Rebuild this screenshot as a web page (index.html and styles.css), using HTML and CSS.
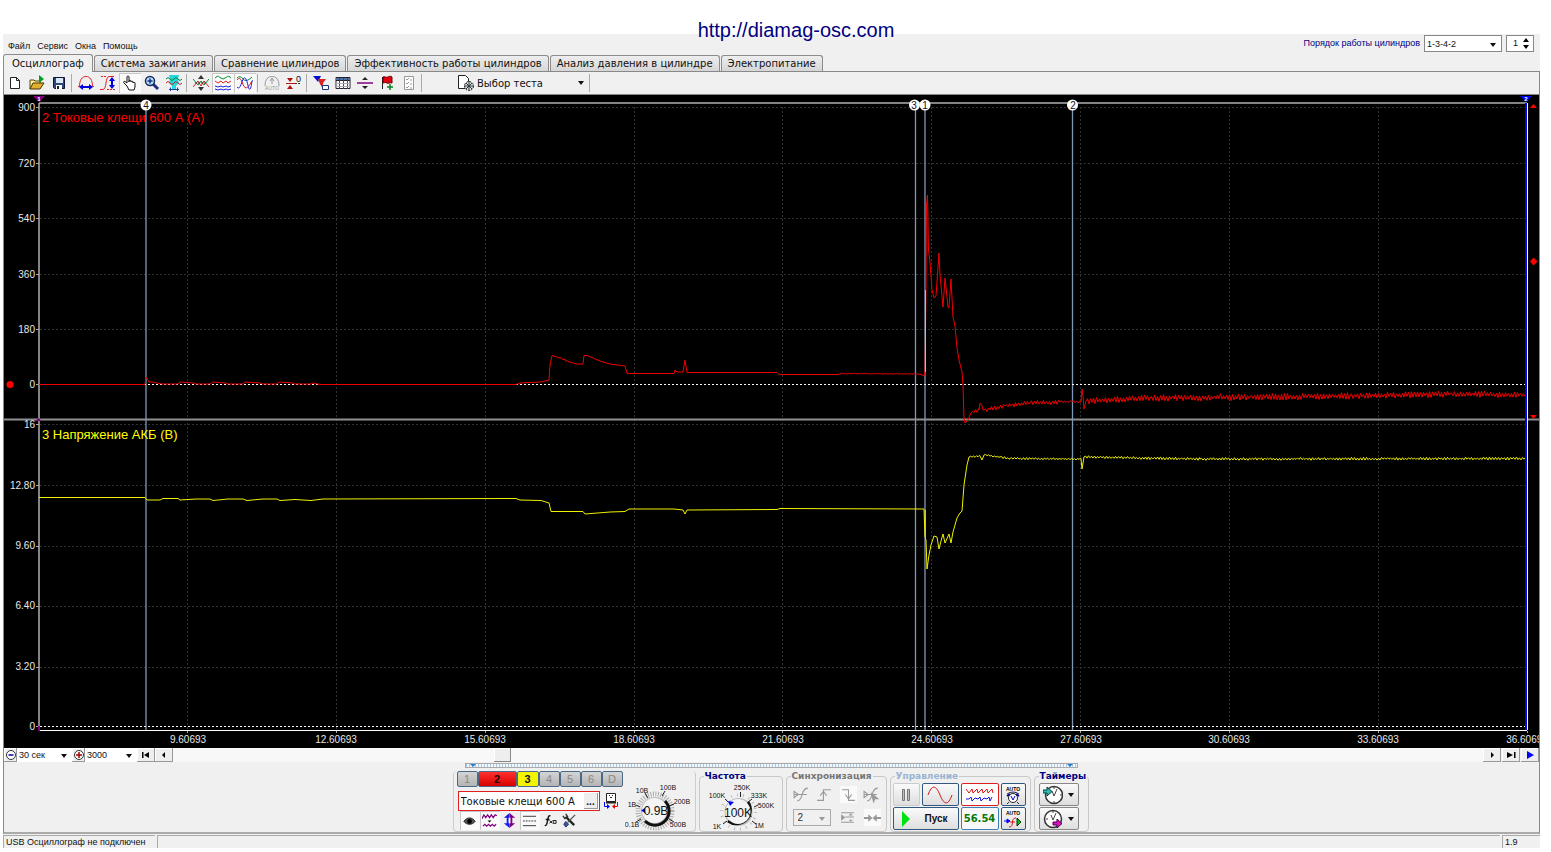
FILE: index.html
```html
<!DOCTYPE html>
<html lang="ru">
<head>
<meta charset="utf-8">
<title>Осциллограф</title>
<link rel="stylesheet" href="styles.css">
</head>
<body>
<a class="site-link" href="http://diamag-osc.com">http://diamag-osc.com</a>
<div class="app">
  <header class="header">
    <nav class="menu">
      <button>Файл</button><button>Сервис</button><button>Окна</button><button>Помощь</button>
    </nav>
    <div class="order">
      <label for="order">Порядок работы цилиндров</label>
      <span class="drop order-drop"><select id="order"><option>1-3-4-2</option></select></span>
      <span class="spin"><input id="cyl" aria-label="Цилиндр" value="1"><svg width="8" height="12" viewBox="0 0 8 12"><path d="M4 0L7 4H1zM4 11L7 7H1z"/></svg></span>
    </div>
  </header>
  <nav class="tabs">
    <button class="tab active">Осциллограф</button>
    <button class="tab">Система зажигания</button>
    <button class="tab">Сравнение цилиндров</button>
    <button class="tab">Эффективность работы цилиндров</button>
    <button class="tab">Анализ давления в цилиндре</button>
    <button class="tab">Электропитание</button>
  </nav>
  <main class="panel">
    <div class="toolbar">
      <button class="tool" aria-label="Новый"><svg viewBox="0 0 16 16"><path d="M3.500 2.500h6l3 3v8h-9z" fill="#fff" stroke="#222"/><path d="M9.500 2.500v3h3" fill="none" stroke="#222"/></svg></button>
      <button class="tool" aria-label="Открыть"><svg viewBox="0 0 16 16"><path d="M1 14V5h4l1 1h5v3" fill="#fff2a0" stroke="#554400"/><path d="M1 14l3-6h11l-4 6z" fill="#e0b030" stroke="#443300"/><path d="M10 0l5 4-5 4z" fill="#00a020"/></svg></button>
      <button class="tool" aria-label="Сохранить"><svg viewBox="0 0 16 16"><path d="M2.500 2.500h11v11h-10l-1-1z" fill="#304878" stroke="#101830"/><path d="M5 3h7v5H5z" fill="#d8e8f8"/><path d="M5 10h6v4H5z" fill="#fff"/><path d="M6 11h2v3H6z" fill="#222"/></svg></button>
      <span class="sep"></span>
      <button class="tool" aria-label="Период"><svg viewBox="0 0 16 16"><path d="M0 11.500h1.500C1.500 5 4 1.500 8 1.500s6.500 3.500 6.500 10H16" fill="none" stroke="#e02020"/><path d="M4 12h8" stroke="#0000e0" stroke-width="2"/><path d="M5 9v6l-4-3zM11 9v6l4-3z" fill="#0000e0"/></svg></button>
      <button class="tool" aria-label="Амплитуда"><svg viewBox="0 0 16 16"><path d="M0 14.500h3C7 14 5 2 9 1.500h5" fill="none" stroke="#e02020"/><path d="M1 1.500h6M7 14.500h9" stroke="#e02020" stroke-dasharray="2 1"/><path d="M12 5v6" stroke="#0000e0" stroke-width="2"/><path d="M9 6h6l-3-4zM9 10h6l-3 4z" fill="#0000e0"/></svg></button>
      <button class="tool on" aria-label="Рука"><svg viewBox="0 0 16 16"><path d="M5 11L2 8c-1-1 0-2 1-1.500L5 8V2c0-1.300 2-1.300 2 0v5-1c0-1 2-1 2 0v1c0-1 2-1 2 0v1c0-1 2-1 2 0v4l-1 3H7z" fill="#fff" stroke="#111"/></svg></button>
      <button class="tool" aria-label="Лупа"><svg viewBox="0 0 16 16"><path d="M9 9l5 5" stroke="#203080" stroke-width="3"/><circle cx="6" cy="6" r="4.500" fill="#b8e0f8" stroke="#182860" stroke-width="1.500"/><path d="M3.500 6h5M6 3.500v5" stroke="#103080" stroke-width="1.500"/></svg></button>
      <button class="tool" aria-label="Фильтр"><svg viewBox="0 0 16 16"><path d="M3 0h10l-1 4 1 4-3 3v4H6v-4L3 8l1-4z" fill="#20d8e0"/><path d="M0 4q2-3 4 0t4 0 4 0 4 0" fill="none" stroke="#008030"/><path d="M0 8q2-3 4 0t4 0 4 0 4 0" fill="none" stroke="#d02020"/><path d="M3 14.500h10M4.500 12.500v4M11.500 12.500v4" stroke="#2040a0"/></svg></button>
      <span class="sep"></span>
      <button class="tool" aria-label="Масштаб"><svg viewBox="0 0 16 16"><path d="M0 4l5 6 3-4 3 4 5-6" fill="none" stroke="#009030"/><path d="M0 12l5-6 3 5 3-5 5 6" fill="none" stroke="#e02020"/><path d="M2 8h12" stroke="#333" stroke-dasharray="2 1"/><path d="M5 4l3-4 3 4zM5 12l3 4 3-4z" fill="#333"/></svg></button>
      <button class="tool on" aria-label="Раздельно"><svg viewBox="0 0 16 16" fill="none"><path d="M0 3.500q2-4 5-1t6 0 5 1" stroke="#009030"/><path d="M0 6l3 2 3-2 2 2 3-2 2 2 3-2" stroke="#e02020"/><path d="M0 11l3 1 3-1 2 1 3-1 2 1 3-1M0 14l3 1 3-1 2 1 3-1 2 1 3-1" stroke="#2020e0"/></svg></button>
      <button class="tool on" aria-label="Вместе"><svg viewBox="0 0 16 16" fill="none"><path d="M0 3q3-3 6 1t9-2" stroke="#009030"/><path d="M0 5q3-4 5 2t4 6 6-7" stroke="#e02020"/><path d="M0 12C4 17 5 1 8 3s3 13 5 11 1-8 3-9" stroke="#2020e0"/></svg></button>
      <span class="sep"></span>
      <button class="tool" aria-label="Авто"><svg viewBox="0 0 16 16"><path d="M1 11C1 4 4 1.500 8 1.500S15 4 15 11M8 4v5M6 6l2-3 2 3" fill="none" stroke="#999"/><text x="8" y="15" text-anchor="middle" font-size="5" fill="#999">AUTO</text></svg></button>
      <button class="tool" aria-label="Ноль"><svg viewBox="0 0 16 16"><path d="M0 8.500h9" stroke="#c01010"/><path d="M1 3h6L4 7zM1 14h6l-3-4z" fill="#b01010"/><path d="M9 8.500h6" stroke="#333" stroke-dasharray="2 1"/><text x="10" y="7" font-size="9" fill="#111">0</text></svg></button>
      <span class="sep"></span>
      <button class="tool" aria-label="Маркер"><svg viewBox="0 0 16 16"><path d="M0 1h8L5 7z" fill="#0010d0"/><path d="M5 4h8l-3 4v6L7 9z" fill="#e02020"/><path d="M9.500 10.500h6v4h-6z" fill="#fff" stroke="#203080"/></svg></button>
      <button class="tool" aria-label="Таблица"><svg viewBox="0 0 16 16"><path d="M1 2.500h14v11H1z" fill="#fff" stroke="#223"/><path d="M1 3h14v2H1z" fill="#5070a0"/><path d="M1 5.500h14" stroke="#223"/><path d="M4.500 3v11M8.500 3v11M12.500 3v11" stroke="#446"/><path d="M1 8.500h14M1 11.500h14" stroke="#aab"/></svg></button>
      <button class="tool" aria-label="Разделить"><svg viewBox="0 0 16 16"><path d="M0 8h16" stroke="#800080" stroke-width="1.500"/><path d="M5 5h6L8 2zM5 11h6l-3 3z" fill="#222"/></svg></button>
      <button class="tool" aria-label="Флаг"><svg viewBox="0 0 16 16"><path d="M3.500 2v12" stroke="#222"/><path d="M4 2c2-1 3 1 5 0s3-1 4 0v6c-2-1-3 1-5 0s-3 0-4 0z" fill="#e00010" stroke="#600"/><path d="M11 9v6M8 12h6" stroke="#008020" stroke-width="1.500"/></svg></button>
      <button class="tool" aria-label="Список"><svg viewBox="0 0 16 16"><path d="M3.500 1.500h9v13h-9z" fill="#fff" stroke="#999"/><path d="M5 4l1 1 2-2M5 8l1 1 2-2M5 12l1 1 2-2M9 5h2M9 9h2M9 13h2" fill="none" stroke="#999"/></svg></button>
      <span class="sep wide"></span>
      <button class="test"><svg width="18" height="18" viewBox="0 0 18 18"><path d="M1.500 1.500h7l3 3v10h-10z" fill="#fff" stroke="#222"/><circle cx="12" cy="12" r="4.500" fill="#d8e4d8" stroke="#222" stroke-dasharray="2 1"/><path d="M12 7v10M7 12h10M9 9l6 6M15 9l-6 6" stroke="#334"/></svg><span>Выбор теста</span><i class="caret"></i></button>
      <span class="sep"></span>
    </div>

    <svg class="chart" viewBox="4 95 1535 653" role="img" aria-label="Осциллограмма">
      <path class="grid" d="M187.500 107V730M336.500 107V730M485.500 107V730M634.500 107V730M782.500 107V730M931.500 107V730M1080.500 107V730M1229.500 107V730M1378.500 107V730M40 107.500H1527M40 163.500H1527M40 218.500H1527M40 274.500H1527M40 329.500H1527M40 424.500H1527M40 485.500H1527M40 546.500H1527M40 606.500H1527M40 667.500H1527"/>
      <path class="ticks" d="M36 107.500h3M36 163.500h3M36 218.500h3M36 274.500h3M36 329.500h3M36 384.500h3M36 424.500h3M36 485.500h3M36 546.500h3M36 606.500h3M36 667.500h3M36 726.500h3M187.500 731v2M336.500 731v2M485.500 731v2M634.500 731v2M782.500 731v2M931.500 731v2M1080.500 731v2M1229.500 731v2M1378.500 731v2M1527.500 731v2"/>
      <path d="M39 103H1527M39 103V731" stroke="#b0b0b0" stroke-width="1.500"/>
      <path d="M39 730.500H1527" stroke="#fff"/>
      <path d="M4 419.500H1539" stroke="#909090" stroke-width="2"/>
      <path d="M146 104V730M915.500 104V730M925 104V730M1072.500 104V730" stroke="#8098b8" stroke-width="1.300"/>
      <path class="zero" d="M40 384.500H1527M40 726.500H1527"/>
      <path id="amps" class="trace red"/>
      <path id="volts" class="trace yellow"/>
      <path d="M925.500 290V372M925.500 510V540" stroke="#80d0e8"/>
      <path d="M1526 103V730" stroke="#0000ff" stroke-width="2"/><path d="M1527.500 103V730" stroke="#fff"/>
      <g class="ylab">
        <text x="35" y="111">900</text><text x="35" y="167">720</text><text x="35" y="222">540</text><text x="35" y="278">360</text><text x="35" y="333">180</text><text x="35" y="388">0</text>
        <text x="35" y="428">16</text><text x="35" y="489">12.80</text><text x="35" y="549">9.60</text><text x="35" y="609">6.40</text><text x="35" y="670">3.20</text><text x="35" y="730">0</text>
      </g>
      <g class="xlab">
        <text x="188" y="743">9.60693</text><text x="336" y="743">12.60693</text><text x="485" y="743">15.60693</text><text x="634" y="743">18.60693</text><text x="783" y="743">21.60693</text><text x="932" y="743">24.60693</text><text x="1081" y="743">27.60693</text><text x="1229" y="743">30.60693</text><text x="1378" y="743">33.60693</text><text x="1527" y="743">36.60693</text>
      </g>
      <text class="name" x="42" y="122" fill="#f00">2 Токовые клещи 600 А (А)</text>
      <text class="name" x="42" y="439" fill="#ff0">3 Напряжение АКБ (В)</text>
      <path d="M33 96h12l-6 6zM35 421l4-3 2 3zM38 726h2v5h-2z" fill="#800080"/><path d="M1520 96h12l-6 6z" fill="#0000ff"/>
      <text class="tiny" x="39" y="101">1</text><text class="tiny" x="1526" y="101">2</text>
      <g class="pin"><circle cx="146" cy="105" r="5.500"/><circle cx="914.500" cy="105" r="5.500"/><circle cx="925" cy="105" r="5.500"/><circle cx="1072.500" cy="105" r="5.500"/>
        <text x="146" y="109">4</text><text x="914" y="109">3</text><text x="925" y="109">1</text><text x="1073" y="109">2</text></g>
      <g fill="#f00"><circle cx="10" cy="384.500" r="3.500"/><path d="M1530 108h7l-3.500-4zM1530 261.500l3.500-4 4 4-4 4zM1530 415h7l-3.500 4z"/></g>
    </svg>

    <div class="timebar">
      <button class="nb" aria-label="Уменьшить"><svg width="12" height="12" viewBox="0 0 12 12"><circle cx="6" cy="6" r="4.500" fill="#fff" stroke="#333"/><path d="M3.500 6h5" stroke="#0000a0" stroke-width="1.500"/></svg></button>
      <span class="drop flat w55"><select aria-label="Развёртка"><option>30 сек</option></select></span>
      <button class="nb" aria-label="Увеличить"><svg width="12" height="12" viewBox="0 0 12 12"><circle cx="6" cy="6" r="4.500" fill="#fff" stroke="#333"/><path d="M3 6h6M6 3v6" stroke="#a00000" stroke-width="1.500"/></svg></button>
      <span class="drop flat w52"><select aria-label="Точки"><option>3000</option></select></span>
      <button class="nb big" aria-label="В начало"><svg width="10" height="8" viewBox="0 0 10 8"><path d="M1 1h1.500v6H1zM3 4l5-3v6z"/></svg></button>
      <button class="nb big" aria-label="Назад"><svg width="10" height="8" viewBox="0 0 10 8"><path d="M3 4l3-3v6z"/></svg></button>
      <div class="track"><button class="thumb" aria-label="Прокрутка"></button></div>
      <button class="nb big" aria-label="Вперёд"><svg width="10" height="8" viewBox="0 0 10 8"><path d="M7 4L4 1v6z"/></svg></button>
      <button class="nb big gap" aria-label="В конец"><svg width="10" height="8" viewBox="0 0 10 8"><path d="M8 1h1.500v6H8zM7 4L1 1v6z"/></svg></button>
      <button class="nb big gap" aria-label="Воспроизвести"><svg width="10" height="8" viewBox="0 0 10 8"><path d="M9 4L2 0v8z" fill="#00f"/></svg></button>
    </div>
    <div class="splitter"><i></i><i></i></div>

    <div class="groups">
      <section class="chan">
        <div class="chan-left">
          <div class="nums"><button>1</button><button class="n-red">2</button><button class="n-yel">3</button><button>4</button><button>5</button><button>6</button><button>D</button></div>
          <div class="probe"><span class="probe-box"><input aria-label="Датчик" value="Токовые клещи 600 А"><button aria-label="Выбрать">...</button></span>
            <svg width="16" height="18" viewBox="0 0 16 18"><path d="M3.500 1.500h9v8h-9z" fill="#fff" stroke="#222"/><path d="M6 3.500h1M9 3.500h1M7 5.500h2" stroke="#222"/><path d="M3 10.500h10" stroke="#222" stroke-width="2"/><path d="M5 14.500H1.500V10" fill="none" stroke="#00f"/><path d="M4 12v5l3-2.500z" fill="#00f"/><path d="M11 14.500h3.500V10" fill="none" stroke="#e00"/><path d="M12 12v5l-3-2.500z" fill="#e00"/></svg></div>
          <div class="minis">
            <button class="on" aria-label="Видимость"><svg viewBox="0 0 16 16"><path d="M2 9c3-5 9-5 12 0-3 4-9 4-12 0z" fill="#555" stroke="#222"/><circle cx="8" cy="9" r="2.500"/></svg></button>
            <button class="on" aria-label="Форма"><svg viewBox="0 0 16 16"><path d="M0 6l2-4 2 3 2-3 2 3 2-3 2 3 2-3 2 1M1 14l2-2 2 2 2-2 2 2 2-2 2 2 2-2" fill="none" stroke="#800080" stroke-width="1.300"/><path d="M6 8h4l-2 2z"/></svg></button>
            <button aria-label="Смещение"><svg viewBox="0 0 16 16"><path d="M8 0l6 5h-3v6h3l-6 5z" fill="#800080"/><path d="M8 0L2 5h3v6H2l6 5z" fill="#1818f0"/><path d="M8 5v6" stroke="#fff" stroke-width="2"/></svg></button>
            <button class="on" aria-label="Линии"><svg viewBox="0 0 16 16"><path d="M1 3.500h14M1 13.500h14" stroke="#333"/><path d="M1 8.500h14" stroke="#333" stroke-dasharray="2 1"/></svg></button>
            <button aria-label="Функция"><svg viewBox="0 0 16 16"><path d="M9 3c-3-1-2 3-4 9-1 2-2 1-2 1M4 7h4" fill="none" stroke="#111" stroke-width="1.500"/><path d="M8 8l3 3M11 8l-3 3M12 8h3v3h-3z" fill="none" stroke="#111"/></svg></button>
            <button aria-label="Настройка"><svg viewBox="0 0 16 16"><path d="M4 4l9 9" stroke="#222" stroke-width="2.500"/><path d="M14 2L6 10" stroke="#555" stroke-width="1.500"/><path d="M1 3l2 3 3-2-2-3" fill="none" stroke="#333" stroke-width="1.500"/><path d="M4 9l3 3-3 3-2-3z" fill="#38589c" stroke="#203060"/></svg></button>
          </div>
        </div>
        <svg class="knob" width="70" height="56" viewBox="625 775 70 56" role="img" aria-label="Предел 0.9В">
          <circle cx="655" cy="811" r="17" fill="none" stroke="#aaa" stroke-width="5" stroke-dasharray="1 1.500"/>
          <path d="M636 805l4 2M645 793l3 5M665 791l-3 5M674 804l-5 2M636 822l5-3M674 822l-5-3" stroke="#222"/>
          <circle cx="655" cy="811" r="14" fill="#bbb"/><path d="M645 821A14 14 0 0 0 665 801" fill="none" stroke="#111" stroke-width="3"/><circle cx="654.500" cy="810.500" r="12.500" fill="#f4f4f4"/>
          <path d="M641 810.500l4-2.500v5z" fill="#00f"/>
          <text class="kv" x="656" y="815">0.9B</text>
          <g class="kl"><text x="632" y="827">0.1B</text><text x="632" y="807">1B</text><text x="642" y="793">10B</text><text x="668" y="790">100B</text><text x="682" y="804">200B</text><text x="678" y="827">500B</text></g>
        </svg>
      </section>
      <fieldset class="freq"><legend>Частота</legend>
        <svg class="knob" width="78" height="48" viewBox="702 782 78 48" role="img" aria-label="Частота 100K">
          <circle cx="738.500" cy="811" r="17" fill="none" stroke="#bbb" stroke-width="3" stroke-dasharray="1 5"/>
          <path d="M725 798l4 4M740.500 791v5M752 798l-4 3M758 804l-4 2M723 823l4-3M756 823l-4-3" stroke="#222"/>
          <circle cx="738.500" cy="811" r="14" fill="#bbb"/><path d="M728 820A14 14 0 0 0 748 801" fill="none" stroke="#111" stroke-width="3"/><circle cx="738" cy="810.500" r="12.500" fill="#f4f4f4"/>
          <path d="M728 800l6 1-4 4z" fill="#00f"/>
          <text class="kv" x="738" y="816">100K</text>
          <g class="kl"><text x="717" y="797">100K</text><text x="742" y="789">250K</text><text x="759" y="797">333K</text><text x="766" y="807">500K</text><text x="717" y="828">1K</text><text x="759" y="827">1M</text></g>
        </svg>
      </fieldset>
      <fieldset class="sync"><legend>Синхронизация</legend>
        <div class="sync-row">
          <svg viewBox="0 0 16 16"><path d="M1 8h12M4 14C10 14 7 2 14 2M1 5v6l4-3z"/></svg>
          <svg viewBox="0 0 16 16"><path d="M1 13.500h6V3.500h7M4 9l3-4 3 4"/></svg>
          <svg class="lit" viewBox="0 0 16 16"><path d="M2 3.500h6v10h6M5 8l3 4 3-4"/></svg>
          <svg viewBox="0 0 16 16"><path d="M1 8h12M4 14C10 14 7 2 14 2M1 5v6l4-3z"/><path d="M8 7l6 5-3 0-1 3z" fill="#999"/></svg>
        </div>
        <div class="sync-row">
          <span class="drop sync-drop"><select aria-label="Канал синхронизации" disabled><option>2</option></select></span>
          <svg viewBox="0 0 16 16"><path d="M2 3.500h12M6 7.500h8M2 12.500h12"/><path d="M2 5v6l4-3zM9 6l2-2 2 2zM9 10l2 2 2-2z" fill="#999" stroke="none"/></svg>
          <svg class="lit" viewBox="0 0 16 16"><path d="M0 8.500h5M11 8.500h5" stroke-width="2"/><path d="M4 5v7l4-3.500zM12 5v7L8 8.500z" fill="#999" stroke="none"/></svg>
        </div>
      </fieldset>
      <fieldset class="ctrl"><legend>Управление</legend>
        <div class="ctrl-grid">
          <button class="cb off" aria-label="Пауза"><svg width="12" height="14" viewBox="0 0 12 14"><path d="M2.500 1.500h2v11h-2zM7.500 1.500h2v11h-2z" fill="#bbb" stroke="#777"/></svg></button>
          <button class="cb" aria-label="Синус"><svg width="26" height="18" viewBox="0 0 26 18"><path d="M1 9C5-2 9-1 13 9s8 11 12 0" fill="none" stroke="#d01010"/></svg></button>
          <button class="cb redb" aria-label="Сигналы"><svg width="30" height="18" viewBox="0 0 30 18" fill="none"><path d="M1 3l3 4 3-4 1 4 4-4 1 4 4-4 1 4 4-4 1 4 4-4 1 4" stroke="#e01010"/><path d="M1 13h3l2-2 1 4 3-3 3 1 2-2 1 4 3-3 3 1 2-2 1 4 2-4" stroke="#1010e0"/></svg></button>
          <button class="cb" aria-label="Авто таймер"><svg width="22" height="20" viewBox="0 0 22 20"><text class="au" x="11" y="6">AUTO</text><path d="M5 11l3-2M17 11l-3-2" stroke="#00a" stroke-width="2"/><circle cx="11" cy="13" r="4.500" fill="#fff" stroke="#222"/><path d="M9 11l2 4 2-4" fill="none" stroke="#00c"/><path d="M5 9q6-4 12 0M7 17l-2 2M15 17l2 2" fill="none" stroke="#224"/></svg></button>
          <button class="cb start"><svg width="10" height="16" viewBox="0 0 10 16"><path d="M1 0l8 8-8 8z" fill="#00e010"/></svg><span>Пуск</span></button>
          <output class="cb time">56.54</output>
          <button class="cb" aria-label="Авто запуск"><svg width="22" height="20" viewBox="0 0 22 20"><text class="au" x="11" y="6">AUTO</text><path d="M2 12h3M5 10l3 2-3 2z" stroke="#00f" fill="#00f"/><path d="M7 18c6 0 1-9 7-9M8 13h5" fill="none" stroke="#d01010"/><path d="M15 9l4 4-4 4z" fill="#00c010" stroke="#030"/></svg></button>
        </div>
      </fieldset>
      <fieldset class="timers"><legend>Таймеры</legend>
        <button class="cb" aria-label="Таймер запуска"><svg width="20" height="20" viewBox="0 0 20 20"><circle cx="11" cy="10" r="8.500" fill="#fff" stroke="#333" stroke-width="1.500"/><path d="M9 6l2 5 3-7M11 2v2M11 16v2M17 10h2" fill="none" stroke="#444"/><path d="M0 5h4V2l5 4.500L4 11V8H0z" fill="#30b8b0" stroke="#044"/></svg><i class="caret"></i></button>
        <button class="cb" aria-label="Таймер остановки"><svg width="20" height="20" viewBox="0 0 20 20"><circle cx="10" cy="10" r="8.500" fill="#fff" stroke="#333" stroke-width="1.500"/><path d="M8 6l2 5 3-7M10 2v2M3 10h2" fill="none" stroke="#444"/><path d="M10 13h4v-3l5 4.500-5 4.500v-3h-4z" fill="#e010c0" stroke="#404"/></svg><i class="caret"></i></button>
      </fieldset>
    </div>
  </main>
  <footer class="status"><span class="s1">USB Осциллограф не подключен</span><span class="s2"></span><span class="s3">1.9</span></footer>
</div>
<script src="chart.js"></script>
</body>
</html>
```

FILE: styles.css
```css
* { box-sizing: border-box; }
body { margin: 0; padding: 34px 11px 0 3px; background: #fff; font-family: "Liberation Sans", Arial, sans-serif; font-size: 10px; color: #111; position: relative; }
button, input, select { font: inherit; color: inherit; margin: 0; padding: 0; border: 0; background: none; border-radius: 0; }
button { display: flex; align-items: center; justify-content: center; }
svg { display: block; flex: none; }
.site-link { position: absolute; top: 18px; left: 0; right: 0; margin: 0 auto; width: max-content; padding-left: 41px; font-size: 20px; line-height: 24px; color: #000080; text-decoration: none; }
.app { background: #f0f0f0; }
.header { display: flex; justify-content: space-between; height: 20px; }
.menu { display: flex; gap: 7px; padding: 6px 0 0 5px; font-size: 9px; line-height: 12px; align-items: flex-start; }
.order { display: flex; align-items: flex-start; gap: 4px; padding: 1px 6px 0 0; color: #000080; font-size: 9px; line-height: 17px; }
.drop { position: relative; display: flex; background: #fff; border: 1px solid #888; color: #111; font-size: 9px; }
.drop select { appearance: none; width: 100%; padding-left: 2px; outline: 0; }
.drop::after, .caret { content: ""; border: 3px solid transparent; border-top: 4px solid #111; border-bottom: 0; }
.drop::after { position: absolute; right: 5px; top: 50%; margin-top: -1px; pointer-events: none; }
.order-drop { width: 78px; height: 17px; }
.spin { display: flex; align-items: center; width: 28px; height: 17px; background: #fff; border: 1px solid #888; color: #111; }
.spin input { width: 15px; padding-left: 6px; }
.tabs { display: flex; height: 17px; align-items: flex-end; }
.tab { height: 16px; padding: 0 6px; border: 1px solid #8c8c8c; border-bottom: 0; border-radius: 3px 3px 0 0; background: linear-gradient(#eee, #d6d6d6); font-family: "DejaVu Sans", sans-serif; font-size: 10px; white-space: nowrap; margin-right: 1px; }
.tab.active { height: 18px; margin-bottom: -1px; padding: 0 8px; background: #f0f0f0; position: relative; }
.panel { border: 1px solid #888; border-bottom: 2px solid #aaa; }
.toolbar { display: flex; align-items: center; height: 23px; border-bottom: 1px solid #888; }
.tool { width: 22px; height: 20px; }
.tool svg { width: 16px; height: 16px; }
.on { background: #fafafa; box-shadow: inset 1px 1px #c8c8c8; }
.sep { width: 1px; height: 18px; margin: 0 3px 0 1px; background: #aaa; }
.sep.wide { margin-right: 35px; }
.test { width: 131px; justify-content: flex-start; gap: 2px; font-family: "DejaVu Sans", sans-serif; font-size: 10px; }
.test .caret { margin-left: auto; margin-right: 4px; }
.chart { width: 100%; height: auto; background: #000; }
.grid { stroke: #303030; stroke-dasharray: 2 2; }
.zero { stroke: #fff; stroke-dasharray: 2 2; }
.ticks { stroke: #aaa; }
.trace { fill: none; stroke-width: 1; stroke-linejoin: bevel; }
.red { stroke: #f00000; }
.yellow { stroke: #f0f000; }
.ylab, .xlab { fill: #e8e8e8; font-size: 10px; text-anchor: end; }
.xlab { text-anchor: middle; }
.name { font-size: 13px; }
.tiny { font-size: 6px; font-weight: bold; text-anchor: middle; fill: #fff; }
.pin circle { fill: #fff; }
.pin text { font-size: 10px; text-anchor: middle; fill: #111; }
.timebar { display: flex; height: 14px; }
.nb { width: 13px; background: #eee; box-shadow: inset -1px -1px #999, inset 1px 1px #fff; }
.nb.big { width: 18px; }
.gap { margin-left: 1px; }
.flat { border: 0; }
.w55 { width: 55px; }
.w52 { width: 52px; }
.track { flex: 1; display: flex; background: #f8f8f8; }
.thumb { width: 17px; margin-left: 24.500%; background: #eee; box-shadow: inset -1px -1px #888, inset 1px 1px #fff; }
.splitter { width: 613px; height: 5px; margin: 1px auto 3px; border: 1px solid #aaa; display: flex; justify-content: space-between; background: repeating-linear-gradient(90deg, #a8c8e8 0 1px, #f4f8fc 1px 3px); padding: 0 4px; }
.splitter i { border: 3px solid transparent; border-top: 3px solid #2080e0; border-bottom: 0; }
.groups { display: flex; justify-content: center; gap: 3px; height: 61px; padding-right: 2px; }
.chan { display: flex; gap: 1px; width: 243px; height: 61px; border: 1px solid #ccc; border-top: 0; border-radius: 4px; padding-left: 3px; }
.nums { display: flex; height: 16px; }
.nums button { width: 21px; border: 1px solid #4a6888; border-radius: 2px; background: linear-gradient(#d4d4d4, #b4b4b4); color: #888; font-size: 11px; }
.nums .n-red { width: 39px; background: linear-gradient(#ff3030, #d80000); color: #200; font-weight: bold; }
.nums .n-yel { width: 22px; background: #f4f400; color: #111; font-weight: bold; }
.chan-left { display: flex; flex-direction: column; width: 168px; }
.probe { display: flex; align-items: center; gap: 3px; margin-top: 4px; padding-left: 1px; }
.probe-box { display: flex; width: 142px; height: 20px; padding: 1px; border: 1px solid #e02020; background: #fff; }
.probe-box input { flex: 1; min-width: 0; padding-left: 1px; font-family: "DejaVu Sans", sans-serif; font-size: 10px; }
.probe-box button { width: 14px; background: #eee; box-shadow: inset -1px -1px #999; font-weight: bold; }
.minis { display: flex; padding-left: 3px; }
.minis button { width: 20px; height: 19px; }
.minis svg { width: 15px; height: 15px; }
.knob { align-self: flex-end; }
.kv { font-size: 12px; text-anchor: middle; fill: #111; }
.kl { font-size: 7px; text-anchor: middle; fill: #111; }
fieldset { margin: 0; min-width: 0; height: 61px; padding: 2px; border: 1px solid #c8c8c8; border-radius: 4px; }
legend { padding: 0 1px; margin-left: 2px; line-height: 10px; font-family: "DejaVu Sans", sans-serif; font-size: 9px; font-weight: bold; color: #000080; }
.freq { width: 84px; }
.sync { width: 101px; }
.sync legend { color: #777; font-weight: bold; }
.ctrl { width: 141px; }
.ctrl legend { color: #98b4d0; }
.timers { width: 55px; }
.sync-row { display: flex; justify-content: space-between; align-items: center; height: 23px; padding: 0 3px 0 4px; }
.sync-row svg { width: 17px; height: 17px; fill: none; stroke: #999; }
.sync-row .lit { background: #fafafa; }
.sync-drop { width: 38px; height: 17px; background: #f0f0f0; border-color: #aaa; font-size: 10px; }
.sync-drop::after { border-top-color: #999; }
.sync-drop select { color: #333; opacity: 1; padding-left: 4px; }
.ctrl-grid { display: grid; grid-template-columns: 27px 37px 38px 25px; grid-template-rows: 23px 23px; column-gap: 2px; row-gap: 1px; }
.cb { display: flex; align-items: center; justify-content: center; height: 23px; border: 1px solid #305880; border-radius: 2px; background: linear-gradient(#fafafa, #dedede); }
.off { border-color: #ccc; }
.redb { border-color: #e02020; background: #fff; }
.start { grid-column: span 2; justify-content: flex-start; padding-left: 7px; gap: 14px; font-weight: bold; font-size: 10px; }
.time { color: #087808; border-color: #4080b8; font-family: "DejaVu Sans", sans-serif; font-size: 10px; font-weight: bold; background: #f8f8f8; }
.au { font-size: 5px; font-weight: bold; text-anchor: middle; }
.timers .cb { width: 40px; margin: 0 0 1px 2px; gap: 5px; border-color: #888; }
.status { display: flex; gap: 2px; padding-top: 1px; height: 14px; font-size: 9px; line-height: 12px; }
.status span { border-top: 1px solid #aaa; border-left: 1px solid #aaa; padding-left: 2px; white-space: nowrap; }
.s1 { width: 152px; }
.s2 { flex: 1; }
.s3 { width: 38px; }
```

FILE: chart.js
```js
// Key points of each trace: x, y, and the ripple amplitude up to the next point.
const amps = [[39,384.5,0],[145,384.5,0],[146,377,0],[149,382,0],[152,382,0],[162,384,0],[178,384,0],[180,382,0],[194,383,0],[196,384,0],[210,384,0],[213,382,0],[226,383,0],[228,384,0],[243,384,0],[245,382,0],[260,383,0],[263,384,0],[277,384,0],[279,382,0],[293,383,0],[295,384,0],[311,384,0],[313,383,0],[320,384.5,0],[516,384.5,0],[520,383,0],[541,382,0],[549,380,0],[550,365,0],[552,355.5,0],[560,358,1],[570,362,0],[576,364,0],[583,364,0],[584,355.5,0],[587,355.5,0],[600,361,0],[610,364,0],[625,366,0],[627,373.5,0],[674,373.5,0],[675,370,0],[677,372,0],[683,372,0],[685,360,0],[687,372.5,0],[777,372.5,0],[779,374.5,0],[838,374.5,0],[841,373.5,.4],[920,374,0],[924,376,0],[925,371,0],[926,290,0],[926.5,205,0],[927.5,195,0],[928.5,250,0],[930,262,0],[932,290,0],[934,298,0],[936,296,0],[939,253,0],[940,275,0],[943,307,0],[945,278,0],[948,307,0],[949,308,0],[951,279,0],[953,317,0],[955,326,0],[957,348,0],[959,360,0],[962,372,0],[963,385,0],[964,418,0],[965,423,0],[968,420,0],[971,413,2],[979,410,2],[980,403,2],[984,410,2],[1005,406,2],[1030,403,2],[1060,402,1],[1072,401.5,1],[1081,402,0],[1082,389,0],[1083,396,0],[1084,409,0],[1086,401,2.7],[1150,398,3],[1250,397,2.8],[1350,396,2.6],[1450,394,2.6],[1526,395,0]];
const volts = [[39,497.5,0],[145,497.5,0],[147,500,0],[160,500,0],[163,498.5,0],[178,498.5,0],[180,500,0],[196,499,0],[210,499,0],[213,500.5,0],[228,499,0],[243,499,0],[247,500.5,0],[263,499,0],[277,499,0],[280,500.5,0],[295,499.5,0],[311,500.5,0],[323,499,0],[516,498.5,0],[520,500,0],[541,500.5,0],[549,503,0],[551,511.5,0],[583,511.5,0],[585,514,0],[610,512,0],[625,511.5,0],[629,509,0],[674,509,0],[683,510,0],[685,514,0],[687,510,0],[777,509.5,0],[780,508.5,0],[924,509,0],[925,537,0],[926,540,0],[927,569,0],[929,555,0],[931,545,0],[934,536,0],[937,537,0],[939,549,0],[941,541,0],[943,534,0],[945,543,0],[949,534,0],[951,543,0],[953,532,0],[957,518,0],[960,513,0],[962,511,0],[964,485,0],[967,465,0],[969,457,.7],[980,456,0],[982,460,0],[984,455,.7],[1000,457,1],[1010,458.5,1],[1081,459,0],[1082,469,0],[1084,457,1.2],[1200,459,1.2],[1526,458.5,0]];

function build(points) {
  let d = '', seed = 7;
  points.forEach(([x, y, ripple], i) => {
    d += (i ? 'L' : 'M') + x + ' ' + y;
    const next = points[i + 1];
    if (!ripple || !next) return;
    for (let px = x + 1.5, n = 0; px < next[0]; px += 1.5, n++) {
      seed = (seed * 1103515245 + 12345) % 2147483648;
      const base = y + (next[1] - y) * (px - x) / (next[0] - x);
      const swing = (n % 2 ? 1 : -1) * ripple * (.4 + seed / 2147483648 * .8);
      d += 'L' + px + ' ' + (base + swing).toFixed(1);
    }
  });
  return d;
}
document.getElementById('amps').setAttribute('d', build(amps));
document.getElementById('volts').setAttribute('d', build(volts));
```
